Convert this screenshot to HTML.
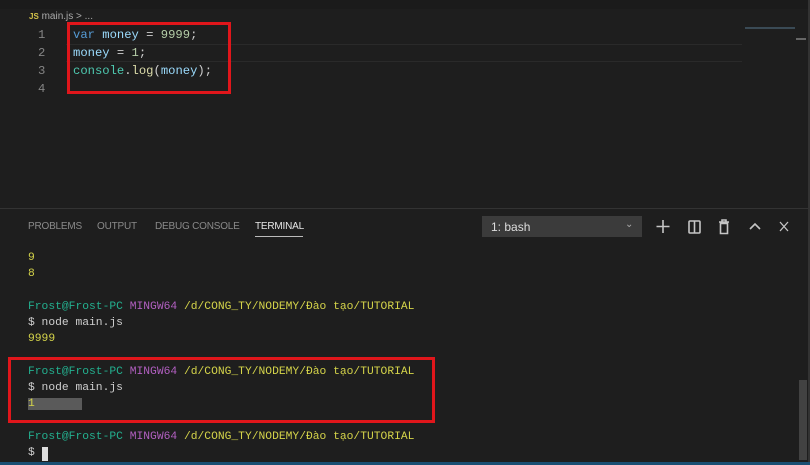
<!DOCTYPE html>
<html><head><meta charset="utf-8"><style>
*{margin:0;padding:0;box-sizing:border-box}
body{width:810px;height:465px;background:#1e1e1e;overflow:hidden;position:relative;font-family:"Liberation Sans",sans-serif}
.abs{position:absolute}
.code{font-family:"Liberation Mono",monospace;font-size:12.2px;white-space:pre;line-height:18px}
.term{font-family:"Liberation Mono","DejaVu Sans Mono",monospace;font-size:11.3px;white-space:pre;line-height:16px;position:absolute;left:28px}
.g{color:#23b08f}.p{color:#b15fc0}.y{color:#d5d44a}.w{color:#cfcfcf}
.tab{position:absolute;top:221px;font-size:10px;color:#8a8a8a;letter-spacing:-0.2px}
</style></head><body>
<div class="abs" style="left:0;top:0;width:810px;height:9px;background:#1b1b1b"></div>
<div class="abs" style="left:29px;top:11px;font-size:10px;color:#aaa"><span style="color:#d4c34a;font-weight:bold;font-size:8px">JS</span> main.js &gt; ...</div>
<div class="abs" style="left:66px;top:44px;width:676px;height:1px;background:#2a2a2a"></div>
<div class="abs" style="left:66px;top:61px;width:676px;height:1px;background:#2a2a2a"></div>
<div class="abs code" style="left:38px;top:26px;color:#858585">1
2
3
4</div>
<div class="abs code" style="left:73px;top:26px;color:#9cdcfe"><span style="color:#569cd6">var</span> money <span class="w">= </span><span style="color:#b5cea8">9999</span><span class="w">;</span>
money <span class="w">= </span><span style="color:#b5cea8">1</span><span class="w">;</span>
<span style="color:#4ec9b0">console</span><span class="w">.</span><span style="color:#dcdcaa">log</span><span class="w">(</span>money<span class="w">);</span></div>
<div class="abs" style="left:67px;top:22px;width:164px;height:72px;border:3px solid #e0161b"></div>
<div class="abs" style="left:745px;top:27px;width:50px;height:2px;background:#3a4a55"></div>
<div class="abs" style="left:796px;top:38px;width:10px;height:2px;background:#666"></div>
<div class="abs" style="left:808px;top:0;width:2px;height:465px;background:#333"></div>
<div class="abs" style="left:0;top:208px;width:810px;height:1px;background:#333"></div>
<div class="tab" style="left:28px">PROBLEMS</div>
<div class="tab" style="left:97px">OUTPUT</div>
<div class="tab" style="left:155px">DEBUG CONSOLE</div>
<div class="tab" style="left:255px;color:#e7e7e7">TERMINAL</div>
<div class="abs" style="left:255px;top:236px;width:48px;height:1px;background:#bbb"></div>
<div class="abs" style="left:482px;top:216px;width:160px;height:21px;background:#3b3b3b"></div>
<div class="abs" style="left:491px;top:220px;font-size:12px;color:#ddd">1: bash</div>
<div class="abs" style="left:625px;top:219px;font-size:10px;color:#aaa">⌄</div>
<svg class="abs" style="left:650px;top:216px" width="150" height="22" fill="none" stroke="#c5c5c5" stroke-width="1.6">
<path d="M13 4v13M6.5 10.5h13"/>
<rect x="39" y="5" width="11" height="12" rx="1"/><path d="M44.5 5v12"/>
<path d="M69 6h10M72 6V4h4v2M70.5 7.5h7v10h-7z"/>
<path d="M100 13l5-5 5 5"/>
<path d="M130 6l8 9M138 6l-8 9" stroke-width="1.3"/>
</svg>
<div class="term y" style="top:250px">9
8</div>
<div class="term" style="top:299px"><span class="g">Frost@Frost-PC</span> <span class="p">MINGW64</span> <span class="y">/d/CONG_TY/NODEMY/Đào tạo/TUTORIAL</span>
<span class="w">$ node main.js</span>
<span class="y">9999</span></div>
<div class="term" style="top:364px"><span class="g">Frost@Frost-PC</span> <span class="p">MINGW64</span> <span class="y">/d/CONG_TY/NODEMY/Đào tạo/TUTORIAL</span>
<span class="w">$ node main.js</span>
<span class="y" style="background:#5a5a5a">1       </span></div>
<div class="abs" style="left:8px;top:357px;width:427px;height:66px;border:3px solid #e0161b"></div>
<div class="term" style="top:429px"><span class="g">Frost@Frost-PC</span> <span class="p">MINGW64</span> <span class="y">/d/CONG_TY/NODEMY/Đào tạo/TUTORIAL</span>
<span class="w">$ </span></div>
<div class="abs" style="left:42px;top:447px;width:6px;height:14px;background:#ddd"></div>
<div class="abs" style="left:799px;top:380px;width:8px;height:80px;background:#424242"></div>
<div class="abs" style="left:0;top:462px;width:810px;height:3px;background:#1a4f73"></div>
</body></html>
